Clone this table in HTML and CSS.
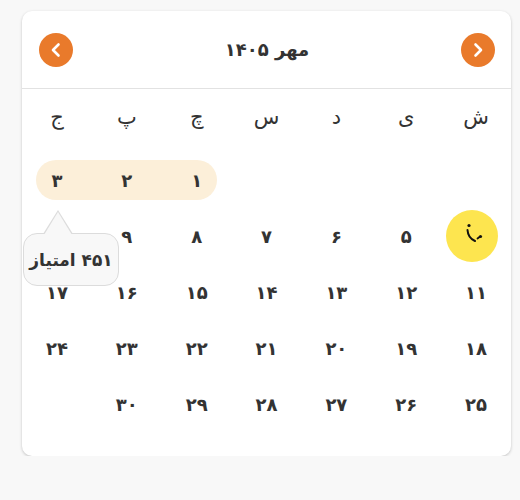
FILE: index.html
```html
<!DOCTYPE html>
<html lang="fa" dir="rtl">
<head>
<meta charset="utf-8">
<link rel="stylesheet" href="styles.css">
</head>
<body>
<div class="card">
  <div class="header">
    <button class="nav"><svg width="34" height="34" viewBox="0 0 34 34"><circle cx="17" cy="17" r="17" fill="#e97a2b"/><path d="M14.5 11.5 L20 17 L14.5 22.5" fill="none" stroke="#fff" stroke-width="2.6" stroke-linecap="round" stroke-linejoin="round"/></svg></button>
    <div class="title">مهر ۱۴۰۵</div>
    <button class="nav"><svg width="34" height="34" viewBox="0 0 34 34"><circle cx="17" cy="17" r="17" fill="#e97a2b"/><path d="M19.5 11.5 L14 17 L19.5 22.5" fill="none" stroke="#fff" stroke-width="2.6" stroke-linecap="round" stroke-linejoin="round"/></svg></button>
  </div>
  <div class="weekdays">
    <div>ش</div><div>ی</div><div>د</div><div>س</div><div>چ</div><div>پ</div><div>ج</div>
  </div>
  <div class="days">
    <div class="range"></div>
    <div class="day r1 c5">۱</div>
    <div class="day r1 c6">۲</div>
    <div class="day r1 c7">۳</div>
    <div></div><div></div><div></div><div></div>
    <div class="day"><span class="today"><svg width="52" height="52" viewBox="0 0 52 52"><circle cx="26" cy="26" r="26" fill="#fde54f"/><circle cx="23" cy="15.5" r="1.6" fill="#111"/><path d="M21.5 20 Q22 28 29 31" fill="none" stroke="#111" stroke-width="2" stroke-linecap="round"/><path d="M31.5 28.5 L33.5 27" fill="none" stroke="#111" stroke-width="1.8" stroke-linecap="round"/><circle cx="34.5" cy="26.5" r="1.6" fill="#111"/></svg></span></div>
    <div class="day">۵</div>
    <div class="day">۶</div>
    <div class="day">۷</div>
    <div class="day">۸</div>
    <div class="day">۹</div>
    <div class="day">۱۰</div>
    <div class="day">۱۱</div>
    <div class="day">۱۲</div>
    <div class="day">۱۳</div>
    <div class="day">۱۴</div>
    <div class="day">۱۵</div>
    <div class="day">۱۶</div>
    <div class="day">۱۷</div>
    <div class="day">۱۸</div>
    <div class="day">۱۹</div>
    <div class="day">۲۰</div>
    <div class="day">۲۱</div>
    <div class="day">۲۲</div>
    <div class="day">۲۳</div>
    <div class="day">۲۴</div>
    <div class="day">۲۵</div>
    <div class="day">۲۶</div>
    <div class="day">۲۷</div>
    <div class="day">۲۸</div>
    <div class="day">۲۹</div>
    <div class="day">۳۰</div>
  </div>
  <div class="tooltip">۴۵۱ امتیاز</div>
</div>
</body>
</html>
```
FILE: styles.css
```css
* { box-sizing: border-box; }
html, body { margin: 0; padding: 0; }
body {
  background: #f8f8f8;
  font-family: "DejaVu Sans", "Noto Sans", sans-serif;
  color: #333;
  padding: 11px 9px 0 22px;
}
.card {
  position: relative;
  width: 489px;
  background: #fff;
  border-radius: 10px;
  box-shadow: 0 1px 3px rgba(0,0,0,0.22);
  padding-bottom: 24px;
}
.header {
  height: 78px;
  display: flex;
  align-items: center;
  justify-content: space-between;
  padding: 0 16px 0 17px;
  border-bottom: 1px solid #e2e2e2;
}
.nav {
  width: 34px;
  height: 34px;
  padding: 0;
  border: 0;
  background: none;
  display: block;
}
.nav svg { display: block; }
.title {
  font-size: 18px;
  font-weight: bold;
  color: #333;
}
.weekdays {
  display: grid;
  grid-template-columns: repeat(7, 1fr);
  height: 56px;
  align-items: center;
  justify-items: center;
  font-size: 21px;
  color: #333;
}
.days {
  margin-top: 7px;
  display: grid;
  grid-template-columns: repeat(7, 1fr);
  grid-auto-rows: 56px;
  align-items: center;
  justify-items: center;
  font-size: 18px;
  font-weight: bold;
  color: #333;
}
.range {
  grid-row: 1;
  grid-column: 5 / 8;
  justify-self: stretch;
  height: 40px;
  margin: 0 15px 0 14px;
  background: #fcefd9;
  border-radius: 20px;
}
.r1 { grid-row: 1; position: relative; }
.c5 { grid-column: 5; }
.c6 { grid-column: 6; }
.c7 { grid-column: 7; }
.today { display: block; width: 52px; height: 52px; margin-right: 8px; }
.today svg { display: block; }
.tooltip {
  position: absolute;
  left: 1px;
  top: 222px;
  width: 96px;
  height: 53px;
  background: #f8f8f8;
  border: 1px solid #dcdcdc;
  border-radius: 14px;
  display: flex;
  align-items: center;
  justify-content: center;
  font-size: 17px;
  font-weight: bold;
  color: #333;
}
.tooltip::before {
  content: "";
  position: absolute;
  left: 19px;
  top: -24px;
  width: 30px;
  height: 24px;
  background: #dcdcdc;
  clip-path: polygon(50% 0, 100% 100%, 0 100%);
}
.tooltip::after {
  content: "";
  position: absolute;
  left: 20px;
  top: -22px;
  width: 28px;
  height: 23px;
  background: #f8f8f8;
  clip-path: polygon(50% 0, 100% 100%, 0 100%);
}
```
